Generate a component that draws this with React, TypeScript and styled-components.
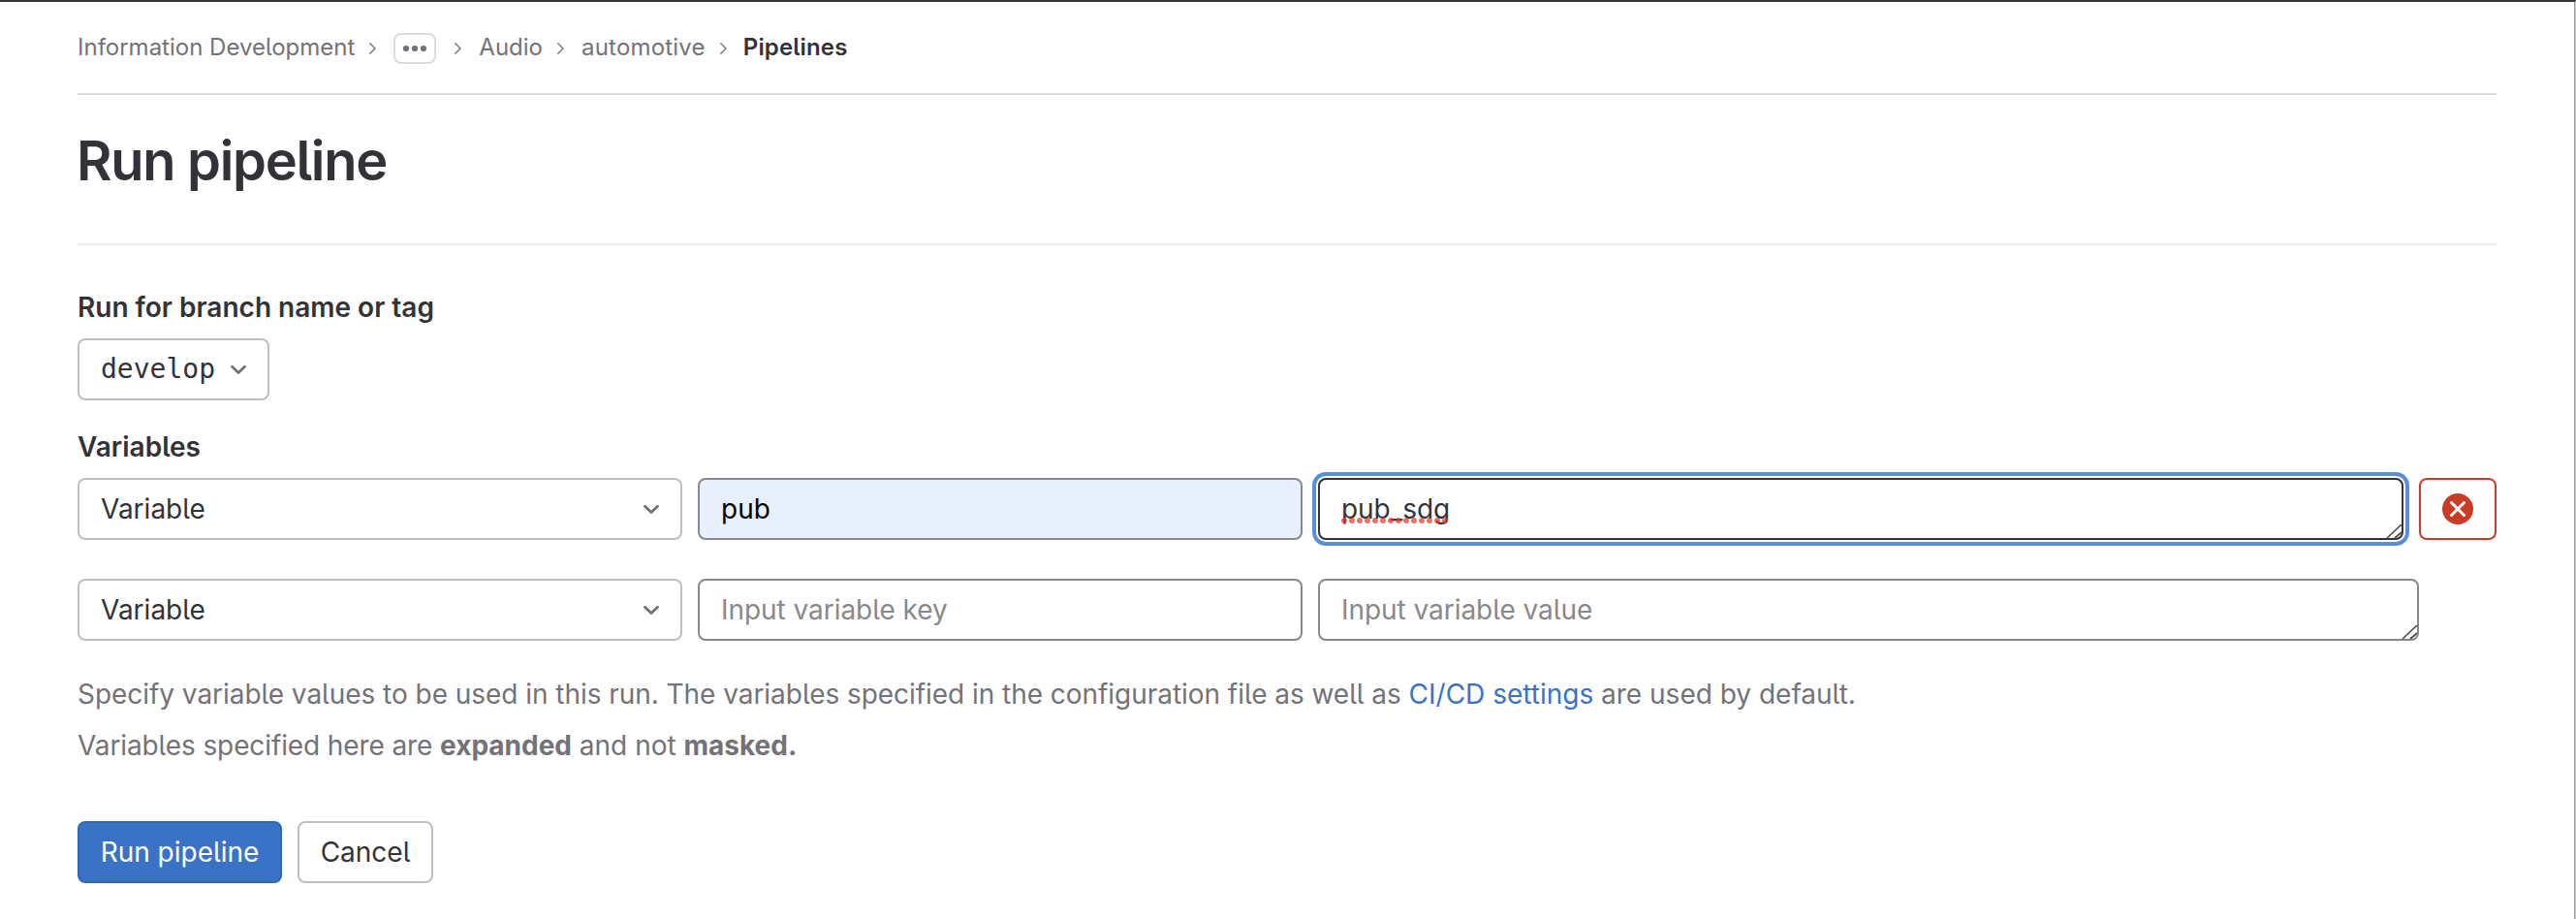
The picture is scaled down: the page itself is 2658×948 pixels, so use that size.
import React from "react";
import styled, { createGlobalStyle } from "styled-components";

const GlobalStyle = createGlobalStyle`
  *, *::before, *::after { box-sizing: border-box; }
  body {
    margin: 0;
    background: #fff;
    color: #333238;
    font-family: Inter, "Noto Sans", sans-serif;
    font-feature-settings: "cv05";
    font-size: 28px;
    line-height: 40px;
    -webkit-font-smoothing: antialiased;
  }
`;

const Page = styled.div`
  height: 948px;
  padding: 0 81px 0 80px;
  border-top: 2px solid #333238;
  border-right: 1px solid #c8c8c8;
  box-shadow: inset -1px 0 #a0a0a0;
  overflow: hidden;
`;

const Breadcrumbs = styled.nav`
  display: flex;
  align-items: center;
  height: 96px;
  border-bottom: 2px solid #dcdcde;
  font-size: 24px;
`;

const Crumb = styled.span<{ $track?: number; $current?: boolean }>`
  white-space: nowrap;
  letter-spacing: ${(p) => p.$track ?? 0}px;
  font-weight: ${(p) => (p.$current ? 600 : 400)};
  color: ${(p) => (p.$current ? "#333238" : "#737278")};
`;

const CrumbChevron = styled.svg<{ $left?: number; $right?: number }>`
  width: 10px;
  height: 14px;
  flex: none;
  margin: 1px ${(p) => p.$right ?? 16}px 0 ${(p) => p.$left ?? 14}px;
`;

const MoreButton = styled.button`
  display: flex;
  align-items: center;
  justify-content: center;
  width: 44px;
  height: 32px;
  margin-top: 1px;
  padding: 0;
  border: 2px solid #dcdcde;
  border-radius: 8px;
  background: #fff;
`;

const TitleBar = styled.header`
  display: flex;
  height: 155px;
  padding-top: 32px;
  border-bottom: 2px solid #ececef;
`;

const Title = styled.h1`
  margin: 0 0 0 -1px;
  font-size: 56px;
  line-height: 72px;
  font-weight: 640;
  letter-spacing: -1.3px;
`;

const Label = styled.div<{ $top: number; $bottom: number }>`
  margin: ${(p) => p.$top}px 0 ${(p) => p.$bottom}px;
  font-weight: 600;
`;

const RefDropdown = styled.button`
  display: flex;
  align-items: center;
  gap: 16px;
  width: 198px;
  height: 64px;
  padding: 0 22px;
  border: 2px solid #bfbfc3;
  border-radius: 8px;
  background: #fff;
  color: #333238;
  font: 28px/40px "DejaVu Sans Mono", monospace;
`;

const Rows = styled.div`
  display: flex;
  flex-direction: column;
  gap: 40px;
`;

const Row = styled.div<{ $inset?: number }>`
  display: flex;
  gap: 16px;
  padding-right: ${(p) => p.$inset ?? 0}px;
`;

const Field = styled.div<{ $border: string; $wide?: boolean; $fill?: string; $ink?: string; $focus?: boolean }>`
  position: relative;
  display: flex;
  align-items: center;
  justify-content: space-between;
  flex: ${(p) => (p.$wide ? "1 1 0" : "0 0 624px")};
  height: 64px;
  padding: 0 22px;
  border: 2px solid ${(p) => p.$border};
  border-radius: 8px;
  background: ${(p) => p.$fill ?? "#fff"};
  color: ${(p) => p.$ink ?? "#333238"};
  box-shadow: ${(p) => (p.$focus ? "0 0 0 2px #fff, 0 0 0 6px #588fd9" : "none")};
`;

const Tracked = styled.span<{ $track: number }>`
  letter-spacing: ${(p) => p.$track}px;
`;

const Misspelled = styled.span`
  position: relative;
  letter-spacing: -0.1px;
  &::after {
    content: "";
    position: absolute;
    left: 0;
    top: 29px;
    width: 110px;
    height: 6px;
    background: radial-gradient(circle at 3px 3px, rgba(232, 54, 40, 0.7) 2.6px, transparent 3.3px) 0 0 / 8px 6px;
  }
`;

const Grip = styled.svg`
  position: absolute;
  right: -1px;
  bottom: -1px;
  width: 17px;
  height: 17px;
`;

const RemoveButton = styled.button`
  display: flex;
  align-items: center;
  justify-content: center;
  flex: none;
  width: 80px;
  height: 64px;
  padding: 0;
  border: 2px solid #c93c26;
  border-radius: 8px;
  background: #fff;
`;

const Help = styled.p`
  margin: 29px 0 0;
  color: #737278;
  line-height: 53px;
  white-space: nowrap;
`;

const Link = styled.a`
  color: #3a72c6;
`;

const Actions = styled.div`
  display: flex;
  gap: 16px;
  margin-top: 51px;
`;

const Button = styled.button<{ $primary?: boolean; $width: number }>`
  width: ${(p) => p.$width}px;
  height: 64px;
  padding: 0;
  border: 2px solid ${(p) => (p.$primary ? "#2f68b9" : "#bfbfc3")};
  border-radius: 8px;
  background: ${(p) => (p.$primary ? "#3a72c6" : "#fff")};
  color: ${(p) => (p.$primary ? "#fff" : "#333238")};
  font-family: inherit;
  font-feature-settings: inherit;
  font-size: 28px;
  line-height: 40px;
`;

const Separator = ({ left, right }: { left?: number; right?: number }) => (
  <CrumbChevron $left={left} $right={right} viewBox="0 0 10 14">
    <path d="M1.4 1.4 L7 7 L1.4 12.6" fill="none" stroke="#89888d" strokeWidth="1.7" />
  </CrumbChevron>
);

const Caret = () => (
  <svg width="16" height="12" viewBox="1 0 16 12">
    <path d="M2.5 3.2 L9 9.4 L15.5 3.2" fill="none" stroke="#737278" strokeWidth="2.8" strokeLinecap="round" strokeLinejoin="round" />
  </svg>
);

const ResizeGrip = () => (
  <Grip viewBox="0 0 17 17">
    <path d="M1 16 L16 2 M9 16 L16 10" fill="none" stroke="#4c4c4f" strokeWidth="1.7" />
  </Grip>
);

export default function App() {
  return (
    <>
      <GlobalStyle />
      <Page>
        <Breadcrumbs>
          <Crumb>Information Development</Crumb>
          <Separator />
          <MoreButton>
            <svg width="26" height="8" viewBox="0 0 26 8">
              <circle cx="4" cy="4" r="3.1" fill="#737278" />
              <circle cx="13" cy="4" r="3.1" fill="#737278" />
              <circle cx="22" cy="4" r="3.1" fill="#737278" />
            </svg>
          </MoreButton>
          <Separator left={18} />
          <Crumb>Audio</Crumb>
          <Separator />
          <Crumb $track={0.2}>automotive</Crumb>
          <Separator right={15} />
          <Crumb $track={0.15} $current>Pipelines</Crumb>
        </Breadcrumbs>
        <TitleBar>
          <Title>Run pipeline</Title>
        </TitleBar>
        <Label $top={44} $bottom={12}>Run for branch name or tag</Label>
        <RefDropdown>
          develop
          <Caret />
        </RefDropdown>
        <Label $top={28} $bottom={12}>Variables</Label>
        <Rows>
          <Row>
            <Field $border="#bfbfc3">
              <span>Variable</span>
              <Caret />
            </Field>
            <Field $border="#89888d" $fill="#e8f0fe" $ink="#000">
              <span>pub</span>
            </Field>
            <Field $border="#333238" $wide $focus>
              <Misspelled>pub_sdg</Misspelled>
              <ResizeGrip />
            </Field>
            <RemoveButton>
              <svg width="32" height="32" viewBox="0 0 32 32">
                <circle cx="16" cy="16" r="16" fill="#c93c26" />
                <path d="M9.5 9.5 L22.5 22.5 M22.5 9.5 L9.5 22.5" stroke="#fff" strokeWidth="3" strokeLinecap="round" />
              </svg>
            </RemoveButton>
          </Row>
          <Row $inset={80}>
            <Field $border="#bfbfc3">
              <span>Variable</span>
              <Caret />
            </Field>
            <Field $border="#89888d" $ink="#89888d">
              <Tracked $track={-0.05}>Input variable key</Tracked>
            </Field>
            <Field $border="#89888d" $ink="#89888d" $wide>
              <Tracked $track={-0.05}>Input variable value</Tracked>
              <ResizeGrip />
            </Field>
          </Row>
        </Rows>
        <Help>
          <Tracked $track={-0.045}>
            Specify variable values to be used in this run. The variables specified in the configuration file as well as{" "}
          </Tracked>
          <Link>CI/CD settings</Link> are used by default.
          <br />
          <Tracked $track={-0.11}>Variables specified here are </Tracked>
          <b>expanded</b> and not <b>masked.</b>
        </Help>
        <Actions>
          <Button $primary $width={211}>Run pipeline</Button>
          <Button $width={140}>Cancel</Button>
        </Actions>
      </Page>
    </>
  );
}
